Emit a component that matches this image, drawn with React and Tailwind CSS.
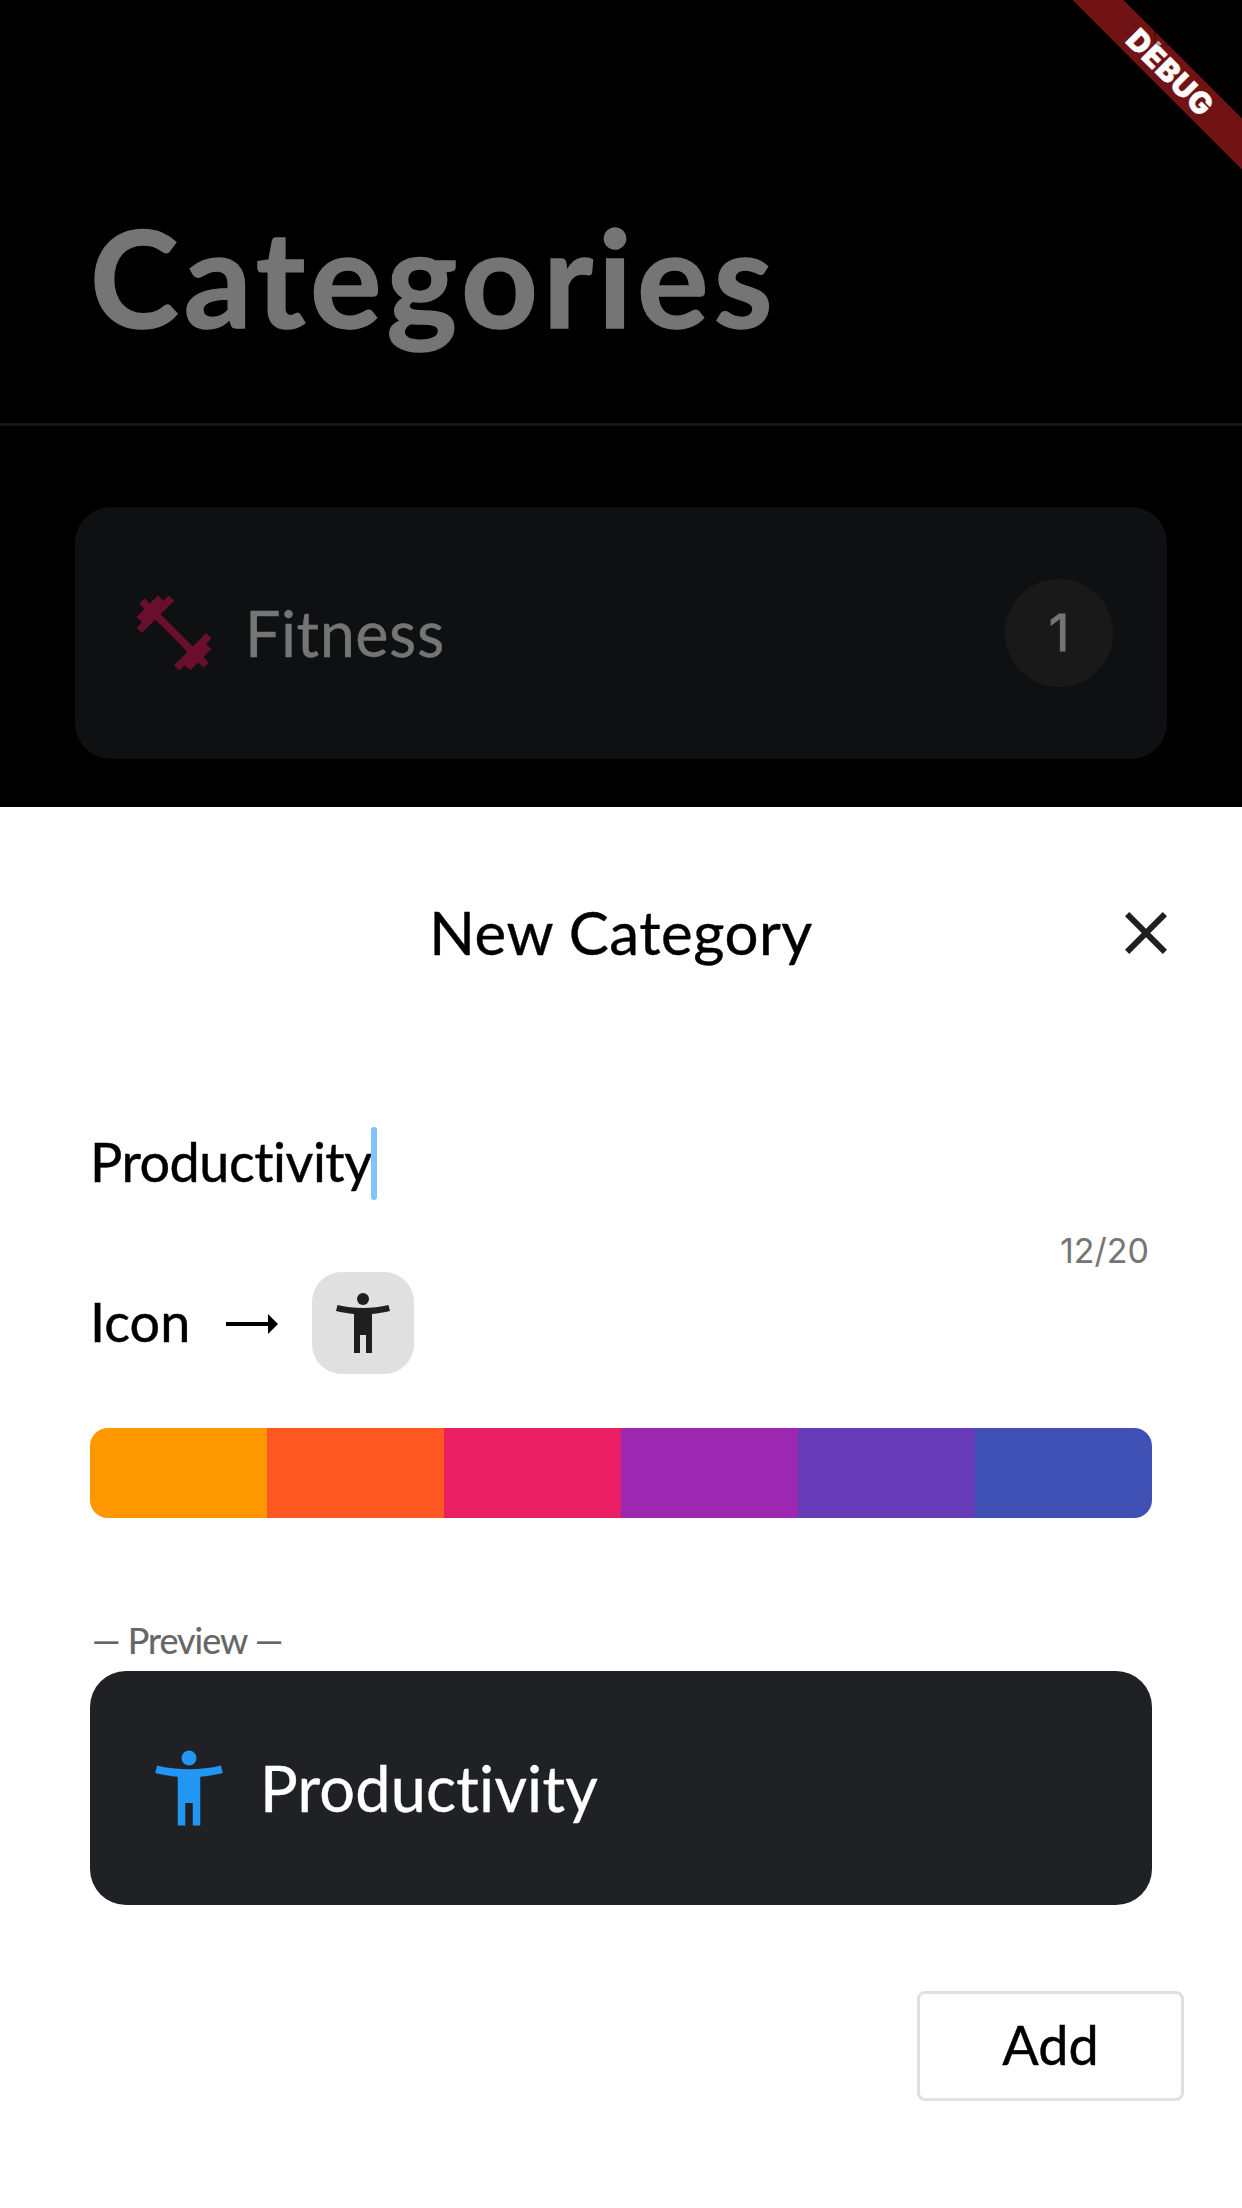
const swatches = [
  'bg-[#ff9800]',
  'bg-[#ff5722]',
  'bg-[#e91e63]',
  'bg-[#9c27b0]',
  'bg-[#673ab7]',
  'bg-[#3f51b5]',
];

function PersonIcon({ className }) {
  return (
    <svg viewBox="0 0 24 24" className={className} fill="currentColor" stroke="none">
      <path d="M20.5 6c-2.61.7-5.67 1-8.5 1s-5.89-.3-8.5-1L3 8c1.86.5 4 .83 6 1v13h2v-6h2v6h2V9c2-.17 4.14-.5 6-1l-.5-2z" />
      <circle cx="12" cy="4" r="2" />
    </svg>
  );
}

function DumbbellIcon({ className }) {
  return (
    <svg viewBox="0 0 24 24" className={className} fill="currentColor">
      <path d="M20.57 14.86L22 13.43 20.57 12 17 15.57 8.43 7 12 3.43 10.57 2 9.14 3.43 7.71 2 5.57 4.14 4.14 2.71 2.71 4.14l1.43 1.43L2 7.71l1.43 1.43L2 10.57 3.43 12 7 8.43 15.57 17 12 20.57 13.43 22l1.43-1.43L16.29 22l2.14-2.14 1.43 1.43 1.43-1.43-1.43-1.43L22 16.29z" />
    </svg>
  );
}

function CloseIcon({ className }) {
  return (
    <svg viewBox="0 0 24 24" className={className} fill="currentColor">
      <path d="M19 6.41L17.59 5 12 10.59 6.41 5 5 6.41 10.59 12 5 17.59 6.41 19 12 13.41 17.59 19 19 17.59 13.41 12z" />
    </svg>
  );
}

function DebugRibbon() {
  return (
    <div className="absolute right-0 top-0 h-[180px] w-[180px] overflow-hidden">
      <div className="absolute left-[-43px] top-[53px] flex h-9 w-[300px] rotate-45 items-center justify-center bg-[#711314]">
        <span className="ml-[4px] font-['Inter',sans-serif] text-[30px] font-black leading-none tracking-[0.9px] text-white">DEBUG</span>
      </div>
      <svg viewBox="0 0 20 20" className="absolute left-[90px] top-[28px] h-5 w-5" fill="none">
        <path d="M3 2v12l3 3h10" stroke="#000" strokeOpacity="0.35" strokeWidth="1.5" />
        <path d="M4 14l3-1 3 4H6z" fill="#a8a8a8" />
      </svg>
    </div>
  );
}

export default function App() {
  return (
    <div className="relative flex h-[2208px] w-[1242px] flex-col overflow-hidden bg-black font-['Lato',sans-serif] whitespace-nowrap [font-variant-ligatures:none] [-webkit-text-stroke:0.4px_currentColor]">
      <header className="flex h-[426px] shrink-0 items-start border-b-[3px] border-[#161616] pl-[90px] pt-[209px]">
        <h1 className="text-[134px] font-bold leading-[136px] tracking-[5px] text-[#757575] [-webkit-text-stroke:1.5px_currentColor]">Categories</h1>
      </header>

      <main className="h-[381px] shrink-0 px-[75px] pt-[81px]">
        <div className="flex h-[252px] items-center rounded-[36px] bg-[#0e1012] pl-[54px] pr-[54px]">
          <DumbbellIcon className="h-[90px] w-[90px] text-[#690e2c]" />
          <span className="mb-[2px] ml-[26px] text-[63px] leading-none tracking-[0.5px] text-[#757575]">Fitness</span>
          <div className="ml-auto flex h-[108px] w-[108px] items-center justify-center rounded-full bg-[#19191a]">
            <span className="mb-[2px] font-['Inter',sans-serif] text-[51px] leading-none text-[#757575] [-webkit-text-stroke:1px_currentColor]">1</span>
          </div>
        </div>
      </main>

      <section className="flex grow flex-col bg-white px-[90px] text-black">
        <div className="relative mt-[90px] flex h-[72px] items-center justify-center">
          <h2 className="mb-[2px] text-[60px] leading-none tracking-[0.5px]">New Category</h2>
          <CloseIcon className="absolute right-[-30px] top-0 h-[72px] w-[72px] text-[#1f1f1f]" />
        </div>

        <div className="mt-[158px] flex h-[73px] items-center">
          <span className="mb-[3px] w-[281px] text-[54px] leading-none tracking-[-0.5px]">Productivity</span>
          <span className="h-[73px] w-[6px] rounded-full bg-[#82c3f9]" />
        </div>
        <div className="mt-[33px] flex h-[36px] items-center justify-end pr-[3px]">
          <span className="font-['Inter',sans-serif] text-[34px] leading-none text-[#757575] [-webkit-text-stroke:0px]">12/20</span>
        </div>

        <div className="mt-[3px] flex h-[102px] items-center">
          <span className="mb-[2px] w-[136px] text-[54px] leading-none">Icon</span>
          <svg viewBox="0 0 52 20" className="mt-[2px] h-5 w-[52px]">
            <path d="M0 8h42V0l10 10-10 10v-8H0z" />
          </svg>
          <div className="ml-[34px] flex h-[102px] w-[102px] items-center justify-center rounded-[30px] bg-[#e0e0e0]">
            <PersonIcon className="h-[72px] w-[72px] text-[#1f1f1f]" />
          </div>
        </div>

        <div className="mt-[54px] flex h-[90px] shrink-0 overflow-hidden rounded-[18px]">
          {swatches.map((c) => (
            <div key={c} className={`flex-1 ${c}`} />
          ))}
        </div>

        <div className="mt-[102px] flex h-[40px] items-center pl-[2px] text-[36px] leading-none tracking-[-1px] text-[#666666] [-webkit-text-stroke:0.2px_currentColor]">
          — Preview —
        </div>
        <div className="mt-[11px] flex h-[234px] shrink-0 items-center rounded-[36px] bg-[#202125] pl-[54px]">
          <PersonIcon className="h-[90px] w-[90px] text-[#2196f3]" />
          <span className="mb-[2px] ml-[26px] text-[63px] leading-none tracking-[0.2px] text-white">Productivity</span>
        </div>

        <button className="mr-[-32px] mt-[86px] flex h-[110px] w-[267px] items-center justify-center self-end rounded-[8px] border-[3px] border-[#e0e0e0] pb-[2px] text-[54px] leading-none">
          Add
        </button>
      </section>

      <DebugRibbon />
    </div>
  );
}
